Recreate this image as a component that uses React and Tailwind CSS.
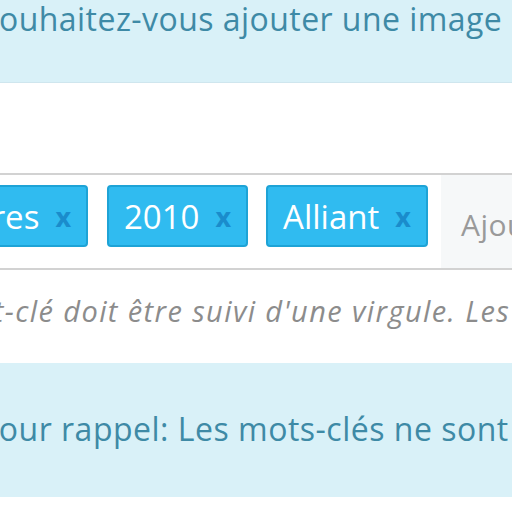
import React from 'react';

function Tag({ label }) {
  return (
    <div className="flex items-center h-[62px] bg-[#30bbf0] border-2 border-[#1ea3d6] rounded-[4px] pl-[15px] pr-[15px] gap-[16px] shrink-0">
      <span className="text-[33px] text-white leading-none">{label}</span>
      <span className="text-[27px] font-bold text-[#1a8ccc] leading-none">x</span>
    </div>
  );
}

export default function App() {
  return (
    <div className="w-[512px] h-[512px] overflow-hidden bg-white font-['Open_Sans',sans-serif]">
      {/* Question band */}
      <div className="h-[83px] bg-[#d9f1f8] border-b border-[#cfe6ee] whitespace-nowrap pt-[1px]">
        <p className="ml-[-19px] text-[32px] leading-[36px] tracking-[0.45px] text-[#3e8aa6]">
          Souhaitez-vous ajouter une image de couverture ?
        </p>
      </div>

      <div className="h-[90px]" />

      {/* Tag input */}
      <div className="h-[97px] border-y-2 border-[#d2d2d2] flex items-start bg-white whitespace-nowrap">
        <div className="w-[88px] mt-[10px] flex justify-end overflow-hidden shrink-0">
          <Tag label="Chaussures" />
        </div>
        <div className="ml-[19px] mt-[10px]">
          <Tag label="2010" />
        </div>
        <div className="ml-[18px] mt-[10px]">
          <Tag label="Alliant" />
        </div>
        <div className="ml-[13px] self-stretch flex-1 bg-[#f6f8f9] flex items-center pl-[20px] pt-[6px]">
          <span className="text-[30px] tracking-[0.5px] text-[#9a9a9a]">Ajouter un mot-clé</span>
        </div>
      </div>

      {/* Help text */}
      <div className="h-[93px] whitespace-nowrap pt-[24px]">
        <p className="ml-[-166px] text-[29px] leading-[34px] tracking-[1.4px] italic text-[#8c8c8c]">
          Chaque mot-clé doit être suivi d'une virgule. Les mots-clés
        </p>
      </div>

      {/* Reminder band */}
      <div className="h-[134px] bg-[#d9f1f8] whitespace-nowrap pt-[48px]">
        <p className="ml-[-21px] text-[32px] leading-[36px] tracking-[0.5px] text-[#3e8aa6]">
          Pour rappel: Les mots-clés ne sont pas visibles
        </p>
      </div>
    </div>
  );
}
